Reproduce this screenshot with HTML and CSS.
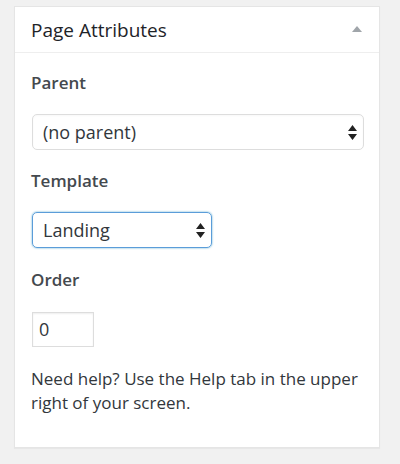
FILE: index.html
```html
<!DOCTYPE html>
<html>
<head>
<meta charset="utf-8">
<link rel="stylesheet" href="styles.css">
</head>
<body>
<div class="postbox">
  <div class="postbox-header">
    <h2 class="postbox-title">Page Attributes</h2>
    <span class="toggle-indicator"></span>
  </div>
  <div class="inside">
    <p class="field-label">Parent</p>
    <div class="select select-wide">
      <span class="select-value">(no parent)</span>
      <svg class="select-arrows" width="9" height="15" viewBox="0 0 9 15"><path d="M4.5 0 L9 6 H0 Z M0 9 H9 L4.5 15 Z" fill="#222"/></svg>
    </div>
    <p class="field-label">Template</p>
    <div class="select select-narrow focused">
      <span class="select-value">Landing</span>
      <svg class="select-arrows" width="9" height="15" viewBox="0 0 9 15"><path d="M4.5 0 L9 6 H0 Z M0 9 H9 L4.5 15 Z" fill="#222"/></svg>
    </div>
    <p class="field-label">Order</p>
    <div class="text-input">0</div>
    <p class="help">Need help? Use the Help tab in the upper right of your screen.</p>
  </div>
</div>
</body>
</html>
```

FILE: styles.css
```css
html, body {
  margin: 0;
  padding: 0;
  background: #f1f1f1;
}
body {
  font-family: "Open Sans", "Noto Sans", sans-serif;
  color: #23282d;
  padding: 6px 20px 16px 14px;
  height: 464px;
  box-sizing: border-box;
}
.postbox {
  background: #fff;
  border: 1px solid #e5e5e5;
  box-shadow: 0 1px 1px rgba(0,0,0,.04);
}
.postbox-header {
  display: flex;
  align-items: center;
  justify-content: space-between;
  height: 45px;
  border-bottom: 1px solid #eee;
  padding: 0 17px 0 16px;
}
.postbox-title {
  margin: 0;
  font-size: 19px;
  font-weight: 400;
  color: #1e2328;
}
.toggle-indicator {
  width: 0;
  height: 0;
  border-left: 5px solid transparent;
  border-right: 5px solid transparent;
  border-bottom: 6px solid #a0a5aa;
  margin-top: -2px;
}
.inside {
  padding: 18px 16px 32px 16px;
}
.field-label {
  margin: 0;
  font-size: 17px;
  font-weight: 600;
  line-height: 24px;
  color: #44494e;
}
.select {
  display: flex;
  align-items: center;
  justify-content: space-between;
  box-sizing: border-box;
  height: 36px;
  border: 1px solid #ddd;
  border-radius: 5px;
  padding: 0 6px 0 10px;
  margin: 19px 0 19px 1px;
  font-size: 18px;
  color: #32373c;
  box-shadow: inset 0 1px 2px rgba(0,0,0,.03);
}
.select-wide { width: 332px; }
.select-narrow { width: 180px; margin-bottom: 20px; }
.focused {
  border-color: #5b9dd9;
  box-shadow: 0 0 2px rgba(30,140,190,.8);
}
.text-input {
  box-sizing: border-box;
  width: 62px;
  height: 35px;
  border: 1px solid #ddd;
  margin: 20px 0 20px 1px;
  padding: 0 6px;
  font-size: 18px;
  line-height: 33px;
  color: #32373c;
  box-shadow: inset 0 1px 2px rgba(0,0,0,.07);
}
.help {
  margin: 0;
  font-size: 17px;
  line-height: 24px;
  color: #32373c;
}
```
